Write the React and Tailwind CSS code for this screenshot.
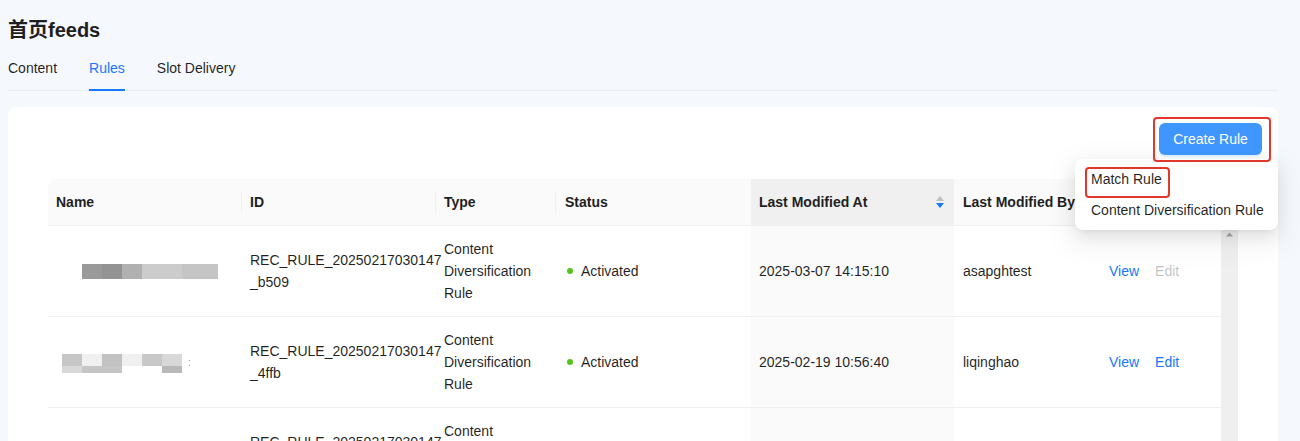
const rows = [
  {
    blur: "a",
    id: ["REC_RULE_20250217030147", "_b509"],
    date: "2025-03-07 14:15:10",
    by: "asapghtest",
    editable: false,
  },
  {
    blur: "b",
    id: ["REC_RULE_20250217030147", "_4ffb"],
    date: "2025-02-19 10:56:40",
    by: "liqinghao",
    editable: true,
  },
  {
    blur: "c",
    id: ["REC_RULE_20250217030147", "_9c2e"],
    date: "2025-02-17 03:01:47",
    by: "liqinghao",
    editable: true,
  },
];

const cols = "grid grid-cols-[194px_194px_120px_195px_203px_147px_120px]";

const BlurA = () => (
  <div className="ml-[26px] flex h-[15px]">
    <div className="w-5 bg-[#9a9a9a]" />
    <div className="w-5 bg-[#939393]" />
    <div className="w-5 bg-[#b0b0b0]" />
    <div className="w-10 bg-[#cccccc]" />
    <div className="w-9 bg-[#c5c5c5]" />
  </div>
);

const BlurB = () => (
  <div className="mt-[2px] ml-[6px] flex items-center gap-[6px]">
    <div className="flex flex-col">
      <div className="flex h-3">
        <div className="w-5 bg-[#c6c6c6]" />
        <div className="w-5 bg-[#f0f0f0]" />
        <div className="w-5 bg-[#c2c2c2]" />
        <div className="w-5 bg-[#f0f0f0]" />
        <div className="w-5 bg-[#c8c8c8]" />
        <div className="w-5 bg-[#d8d8d8]" />
      </div>
      <div className="flex h-[7px]">
        <div className="w-5 bg-[#d8d8d8]" />
        <div className="w-5 bg-[#c6c6c6]" />
        <div className="w-5 bg-[#c6c6c6]" />
        <div className="w-5" />
        <div className="w-5" />
        <div className="w-5 bg-[#b8b8b8]" />
      </div>
    </div>
    <span className="text-[10px] leading-none text-[#9a9a9a]">:</span>
  </div>
);

const BlurC = () => (
  <div className="ml-[14px] flex h-[14px]">
    <div className="w-5 bg-[#cfcfcf]" />
    <div className="w-5 bg-[#bdbdbd]" />
    <div className="w-8 bg-[#d6d6d6]" />
  </div>
);

const SortIcon = () => (
  <svg width="10" height="14" viewBox="0 0 10 14">
    <path d="M5 1 L9 6 L1 6 Z" fill="#bfbfbf" />
    <path d="M5 13 L9 8 L1 8 Z" fill="#1677ff" />
  </svg>
);

export default function App() {
  return (
    <div className="h-[441px] overflow-hidden bg-[#f5f8fd] pt-4 pl-2 pr-[22px] font-['Liberation_Sans','Noto_Sans_CJK_SC',sans-serif] text-[14px] text-black/[0.88]">
      <h1 className="text-[20px] leading-[28px] font-bold text-[#1f1f1f]">首页feeds</h1>

      <div className="flex gap-8 border-b border-[#e9ecf0]">
        <div className="pt-[13px] pb-[11px] leading-[22px]">Content</div>
        <div className="relative pt-[13px] pb-[11px] leading-[22px] text-[#1677ff]">
          Rules
          <div className="absolute right-0 bottom-[-1px] left-0 h-[2px] bg-[#1677ff]" />
        </div>
        <div className="pt-[13px] pb-[11px] leading-[22px]">Slot Delivery</div>
      </div>

      <div className="mt-4 rounded-lg bg-white p-4">
        <div className="relative flex justify-end">
          <div className="relative z-20">
            <button className="h-8 w-[103px] rounded-md bg-[#4096ff] text-white shadow-[0_2px_0_rgba(5,145,255,0.1)]">
              Create Rule
            </button>
            <div className="pointer-events-none absolute top-[-6px] right-[-9px] bottom-[-7px] left-[-6px] rounded-[4px] border-2 border-[#e2382c]" />
          </div>

          <div className="absolute top-[36px] right-[-16px] z-10 w-[203px] rounded-lg bg-white pt-[5px] pb-1 whitespace-nowrap shadow-[0_6px_16px_0_rgba(0,0,0,0.08),0_3px_6px_-4px_rgba(0,0,0,0.12),0_9px_28px_8px_rgba(0,0,0,0.05)]">
            <div className="relative flex h-[31px] items-center px-4">
              Match Rule
              <div className="absolute top-[3px] left-[10px] h-[31px] w-[85px] rounded-[4px] border-2 border-[#e2382c]" />
            </div>
            <div className="flex h-[31px] items-center px-4">Content Diversification Rule</div>
          </div>
        </div>

        <div className="mx-6 mt-6">
          <div className="grid grid-cols-[194px_194px_120px_195px_203px_147px_120px_17px] rounded-t-lg border-b border-[#f0f0f0] bg-[#fafafa] font-semibold text-[#1f1f1f]">
            {["Name", "ID", "Type"].map((h) => (
              <div key={h} className="flex h-[46px] items-center justify-between pl-2 leading-[22px]">
                {h}
                <div className="h-[22px] w-px bg-[#f0f0f0]" />
              </div>
            ))}
            <div className="flex h-[46px] items-center pl-[9px]">Status</div>
            <div className="flex h-[46px] items-center justify-between bg-[#f0f0f0] pr-[9px] pl-2">
              Last Modified At
              <SortIcon />
            </div>
            <div className="flex h-[46px] items-center pl-[9px]">Last Modified By</div>
            <div className="flex h-[46px] items-center pl-2">Action</div>
            <div />
          </div>

          <div className="flex">
            <div className="w-[1173px]">
              {rows.map((r) => (
                <div key={r.id[1]} className={`${cols} border-b border-[#f0f0f0] leading-[22px]`}>
                  <div className="flex items-center px-2 py-3">
                    {r.blur === "a" ? <BlurA /> : r.blur === "b" ? <BlurB /> : <BlurC />}
                  </div>
                  <div className="flex flex-col justify-center px-2 py-3">
                    <span>{r.id[0]}</span>
                    <span>{r.id[1]}</span>
                  </div>
                  <div className="flex flex-col justify-center px-2 py-3">
                    <span>Content</span>
                    <span>Diversification</span>
                    <span>Rule</span>
                  </div>
                  <div className="flex items-center gap-2 py-3 pl-[11px]">
                    <span className="h-[6px] w-[6px] rounded-full bg-[#52c41a]" />
                    Activated
                  </div>
                  <div className="flex items-center bg-[#fafafa] px-2 py-3">{r.date}</div>
                  <div className="flex items-center py-3 pl-[9px]">{r.by}</div>
                  <div className="flex items-center gap-4 py-3 pl-2">
                    <span className="text-[#1677ff]">View</span>
                    <span className={r.editable ? "text-[#1677ff]" : "text-black/25"}>Edit</span>
                  </div>
                </div>
              ))}
            </div>
            <div className="w-[17px] bg-[#efefef] pt-[6px]">
              <svg width="17" height="6" viewBox="0 0 17 6">
                <path d="M8.5 0.5 L12 4.5 L5 4.5 Z" fill="#a3a3a3" />
              </svg>
            </div>
          </div>
        </div>
      </div>
    </div>
  );
}
